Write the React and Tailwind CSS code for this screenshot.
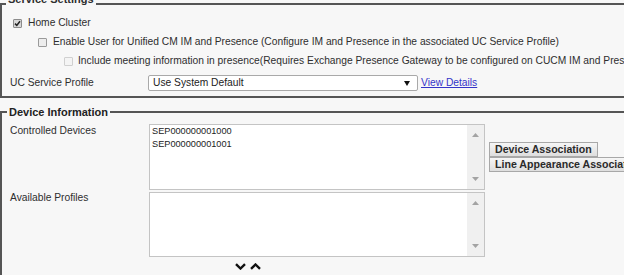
import React from 'react';

// small square checkbox drawn with css; `checked` adds a tick
function Box({ checked = false, disabled = false }) {
  return (
    <span
      className={`inline-flex h-[9px] w-[9px] shrink-0 items-center justify-center rounded-[1px] border ${
        disabled ? 'border-[#d0d0d0] bg-[#f4f4f4]' : checked ? 'border-[#8c8c8c] bg-[#d8d8d8]' : 'border-[#9a9a9a] bg-[#ededed]'
      }`}
    >
      {checked && (
        <svg width="7" height="7" viewBox="0 0 7 7">
          <path d="M1 3.6 L2.8 5.4 L6 1.2" fill="none" stroke="#222" strokeWidth="1.5" />
        </svg>
      )}
    </span>
  );
}

function ScrollArrows() {
  return (
    <div className="flex w-[17px] flex-col items-center justify-between bg-[#f0f0f0] py-[8px]">
      <svg width="7" height="4" viewBox="0 0 7 4">
        <path d="M0 4 L3.5 0 L7 4 Z" fill="#a3a3a3" />
      </svg>
      <svg width="7" height="4" viewBox="0 0 7 4">
        <path d="M0 0 L3.5 4 L7 0 Z" fill="#a3a3a3" />
      </svg>
    </div>
  );
}

function ListBox({ items = [], height }) {
  return (
    <div className={`flex w-[336px] border border-[#c4c4c4] bg-white ${height}`}>
      <div className="flex-1 pl-[2px] text-[9.2px] leading-[13px] text-[#222]">
        {items.map((item) => (
          <div key={item}>{item}</div>
        ))}
      </div>
      <ScrollArrows />
    </div>
  );
}

function Button({ children }) {
  return (
    <button className="h-[15px] whitespace-nowrap border border-[#a8a8a8] bg-gradient-to-b from-[#f6f6f6] to-[#dedede] px-[5px] text-left text-[10.6px] font-bold leading-[13px] text-[#2a2a2a]">
      {children}
    </button>
  );
}

export default function App() {
  return (
    <div className="h-[275px] w-[624px] overflow-hidden bg-[#f7f7f7] font-['Liberation_Sans',Arial,sans-serif] text-[10.25px] text-[#2e2e2e]">
      <div className="w-[780px]">
        {/* Service Settings */}
        <div className="relative mt-[3px] border-2 border-[#555] pb-[5px]">
          <div className="absolute left-[4px] top-[-12px] bg-[#f7f7f7] px-[2px] text-[11px] font-bold leading-[12px]">
            Service Settings
          </div>
          <div className="ml-[11px] mt-[10px] flex h-[16px] items-center gap-[6px]">
            <Box checked />
            <span>Home Cluster</span>
          </div>
          <div className="ml-[36px] mt-[3px] flex h-[16px] items-center gap-[6px]">
            <Box />
            <span>Enable User for Unified CM IM and Presence (Configure IM and Presence in the associated UC Service Profile)</span>
          </div>
          <div className="ml-[62px] mt-[3px] flex h-[16px] items-center gap-[5px]">
            <Box disabled />
            <span className="whitespace-nowrap">
              Include meeting information in presence(Requires Exchange Presence Gateway to be configured on CUCM IM and Presence server)
            </span>
          </div>
          <div className="ml-[8px] mt-[6px] flex h-[16px] items-center">
            <span className="w-[138px]">UC Service Profile</span>
            <div className="flex h-[16px] w-[270px] items-center justify-between rounded-[2px] border border-[#a9a9a9] bg-white pl-[4px] pr-[7px] text-[#222]">
              <span>Use System Default</span>
              <svg width="6" height="5" viewBox="0 0 6 5">
                <path d="M0 0 L6 0 L3 5 Z" fill="#111" />
              </svg>
            </div>
            <a href="#" className="ml-[3px] text-[#3434c9] underline">
              View Details
            </a>
          </div>
        </div>

        {/* Device Information */}
        <div className="relative mt-[13px] h-[200px] border-l-2 border-t-2 border-[#555]">
          <div className="absolute left-[5px] top-[-8px] bg-[#f7f7f7] px-[2px] text-[11px] font-bold leading-[14px] text-[#222]">
            Device Information
          </div>
          <div className="ml-[8px] mt-[11px] flex items-start">
            <span className="w-[139px] leading-[14px]">Controlled Devices</span>
            <ListBox height="h-[66px]" items={['SEP000000001000', 'SEP000000001001']} />
            <div className="ml-[4px] flex flex-col items-start self-center">
              <Button>Device Association</Button>
              <Button>Line Appearance Association for Presence</Button>
            </div>
          </div>
          <div className="ml-[8px] mt-[2px] flex items-start">
            <span className="w-[139px] leading-[12px]">Available Profiles</span>
            <ListBox height="h-[65px]" />
          </div>
          <div className="ml-[233px] mt-[6px] flex items-center gap-[4px]">
            <svg width="11" height="7" viewBox="0 0 11 7">
              <path d="M1 1.2 L5.5 5.5 L10 1.2" fill="none" stroke="#111" strokeWidth="2.4" />
            </svg>
            <svg width="11" height="7" viewBox="0 0 11 7">
              <path d="M1 5.8 L5.5 1.5 L10 5.8" fill="none" stroke="#111" strokeWidth="2.4" />
            </svg>
          </div>
        </div>
      </div>
    </div>
  );
}
